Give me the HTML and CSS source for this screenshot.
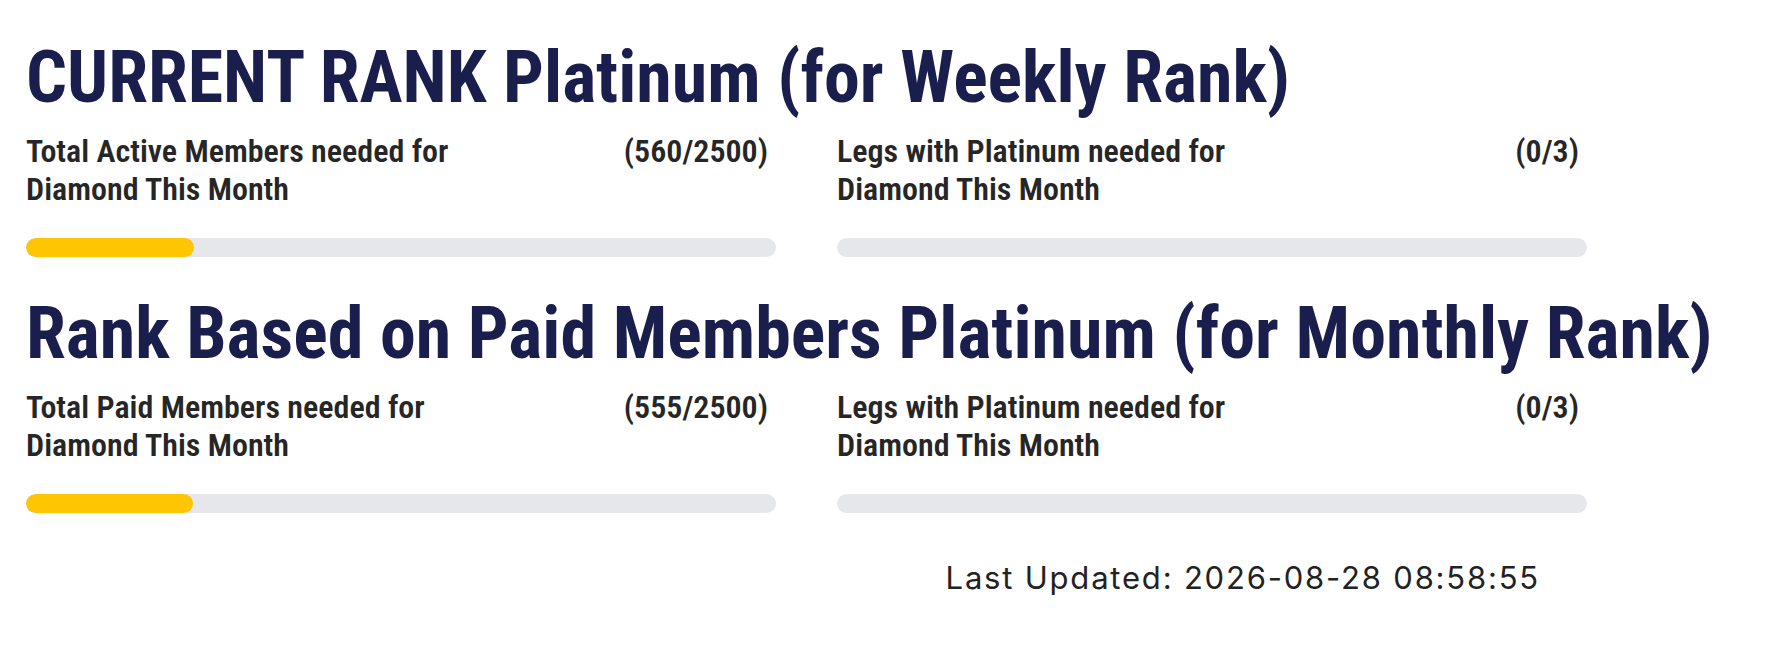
FILE: index.html
```html
<!DOCTYPE html>
<html>
<head>
<title>Rank Progress</title>
<link rel="stylesheet" href="styles.css">
</head>
<body>
<div class="main">

  <div class="rank-block">
    <h2 class="rank-title">CURRENT RANK Platinum (for Weekly Rank)</h2>
    <div class="stats">
      <div class="stat">
        <div class="stat-head">
          <span class="stat-label">Total Active Members needed for Diamond This Month</span>
          <span class="stat-value">(560/2500)</span>
        </div>
        <div class="bar"><div class="bar-fill" style="width:22.4%"></div></div>
      </div>
      <div class="stat">
        <div class="stat-head">
          <span class="stat-label">Legs with Platinum needed for Diamond This Month</span>
          <span class="stat-value">(0/3)</span>
        </div>
        <div class="bar"><div class="bar-fill" style="width:0%"></div></div>
      </div>
    </div>
  </div>

  <div class="rank-block">
    <h2 class="rank-title">Rank Based on Paid Members Platinum (for Monthly Rank)</h2>
    <div class="stats">
      <div class="stat">
        <div class="stat-head">
          <span class="stat-label">Total Paid Members needed for Diamond This Month</span>
          <span class="stat-value">(555/2500)</span>
        </div>
        <div class="bar"><div class="bar-fill" style="width:22.2%"></div></div>
      </div>
      <div class="stat">
        <div class="stat-head">
          <span class="stat-label">Legs with Platinum needed for Diamond This Month</span>
          <span class="stat-value">(0/3)</span>
        </div>
        <div class="bar"><div class="bar-fill" style="width:0%"></div></div>
      </div>
    </div>
  </div>

  <div class="updated">Last Updated: 2026-08-28 08:58:55</div>

</div>
</body>
</html>
```

FILE: styles.css
```css
body {
    margin: 0px;
    padding: 0px;
    background: #ffffff;
}

.main {
    width: 1561px;
    padding-left: 26px;
    padding-top: 35px;
}

.rank-block {
    margin-bottom: 34px;
}

.rank-title {
    margin: 0;
    font-family: "Roboto", sans-serif;
    font-stretch: 75%;
    font-weight: 700;
    font-size: 72px;
    line-height: 86px;
    color: #1a1e4d;
    white-space: nowrap;
}

/* two progress cards side by side */
.stats {
    display: grid;
    grid-template-columns: 750px 750px;
    column-gap: 61px;
    margin-top: 11px;
}

.stat-head {
    display: flex;
    justify-content: space-between;
    align-items: flex-start;
    padding-right: 8px;
    font-family: "Roboto", sans-serif;
    font-stretch: 78%;
    font-weight: 600;
    font-size: 32px;
    line-height: 38px;
    color: #262626;
}

.stat-label {
    width: 480px;
}

.bar {
    margin-top: 30px;
    height: 19px;
    border-radius: 10px;
    background-color: #e5e7eb;
    overflow: hidden;
}

.bar-fill {
    height: 100%;
    border-radius: 10px;
    background-color: #fec502;
}

/* margin collapses with the block above, so this is the full gap */
.updated {
    text-align: right;
    padding-right: 47px;
    margin-top: 46px;
    font-family: "Inter", sans-serif;
    font-weight: 400;
    font-size: 31px;
    line-height: 37px;
    letter-spacing: 1.8px;
    color: #222222;
}
```
